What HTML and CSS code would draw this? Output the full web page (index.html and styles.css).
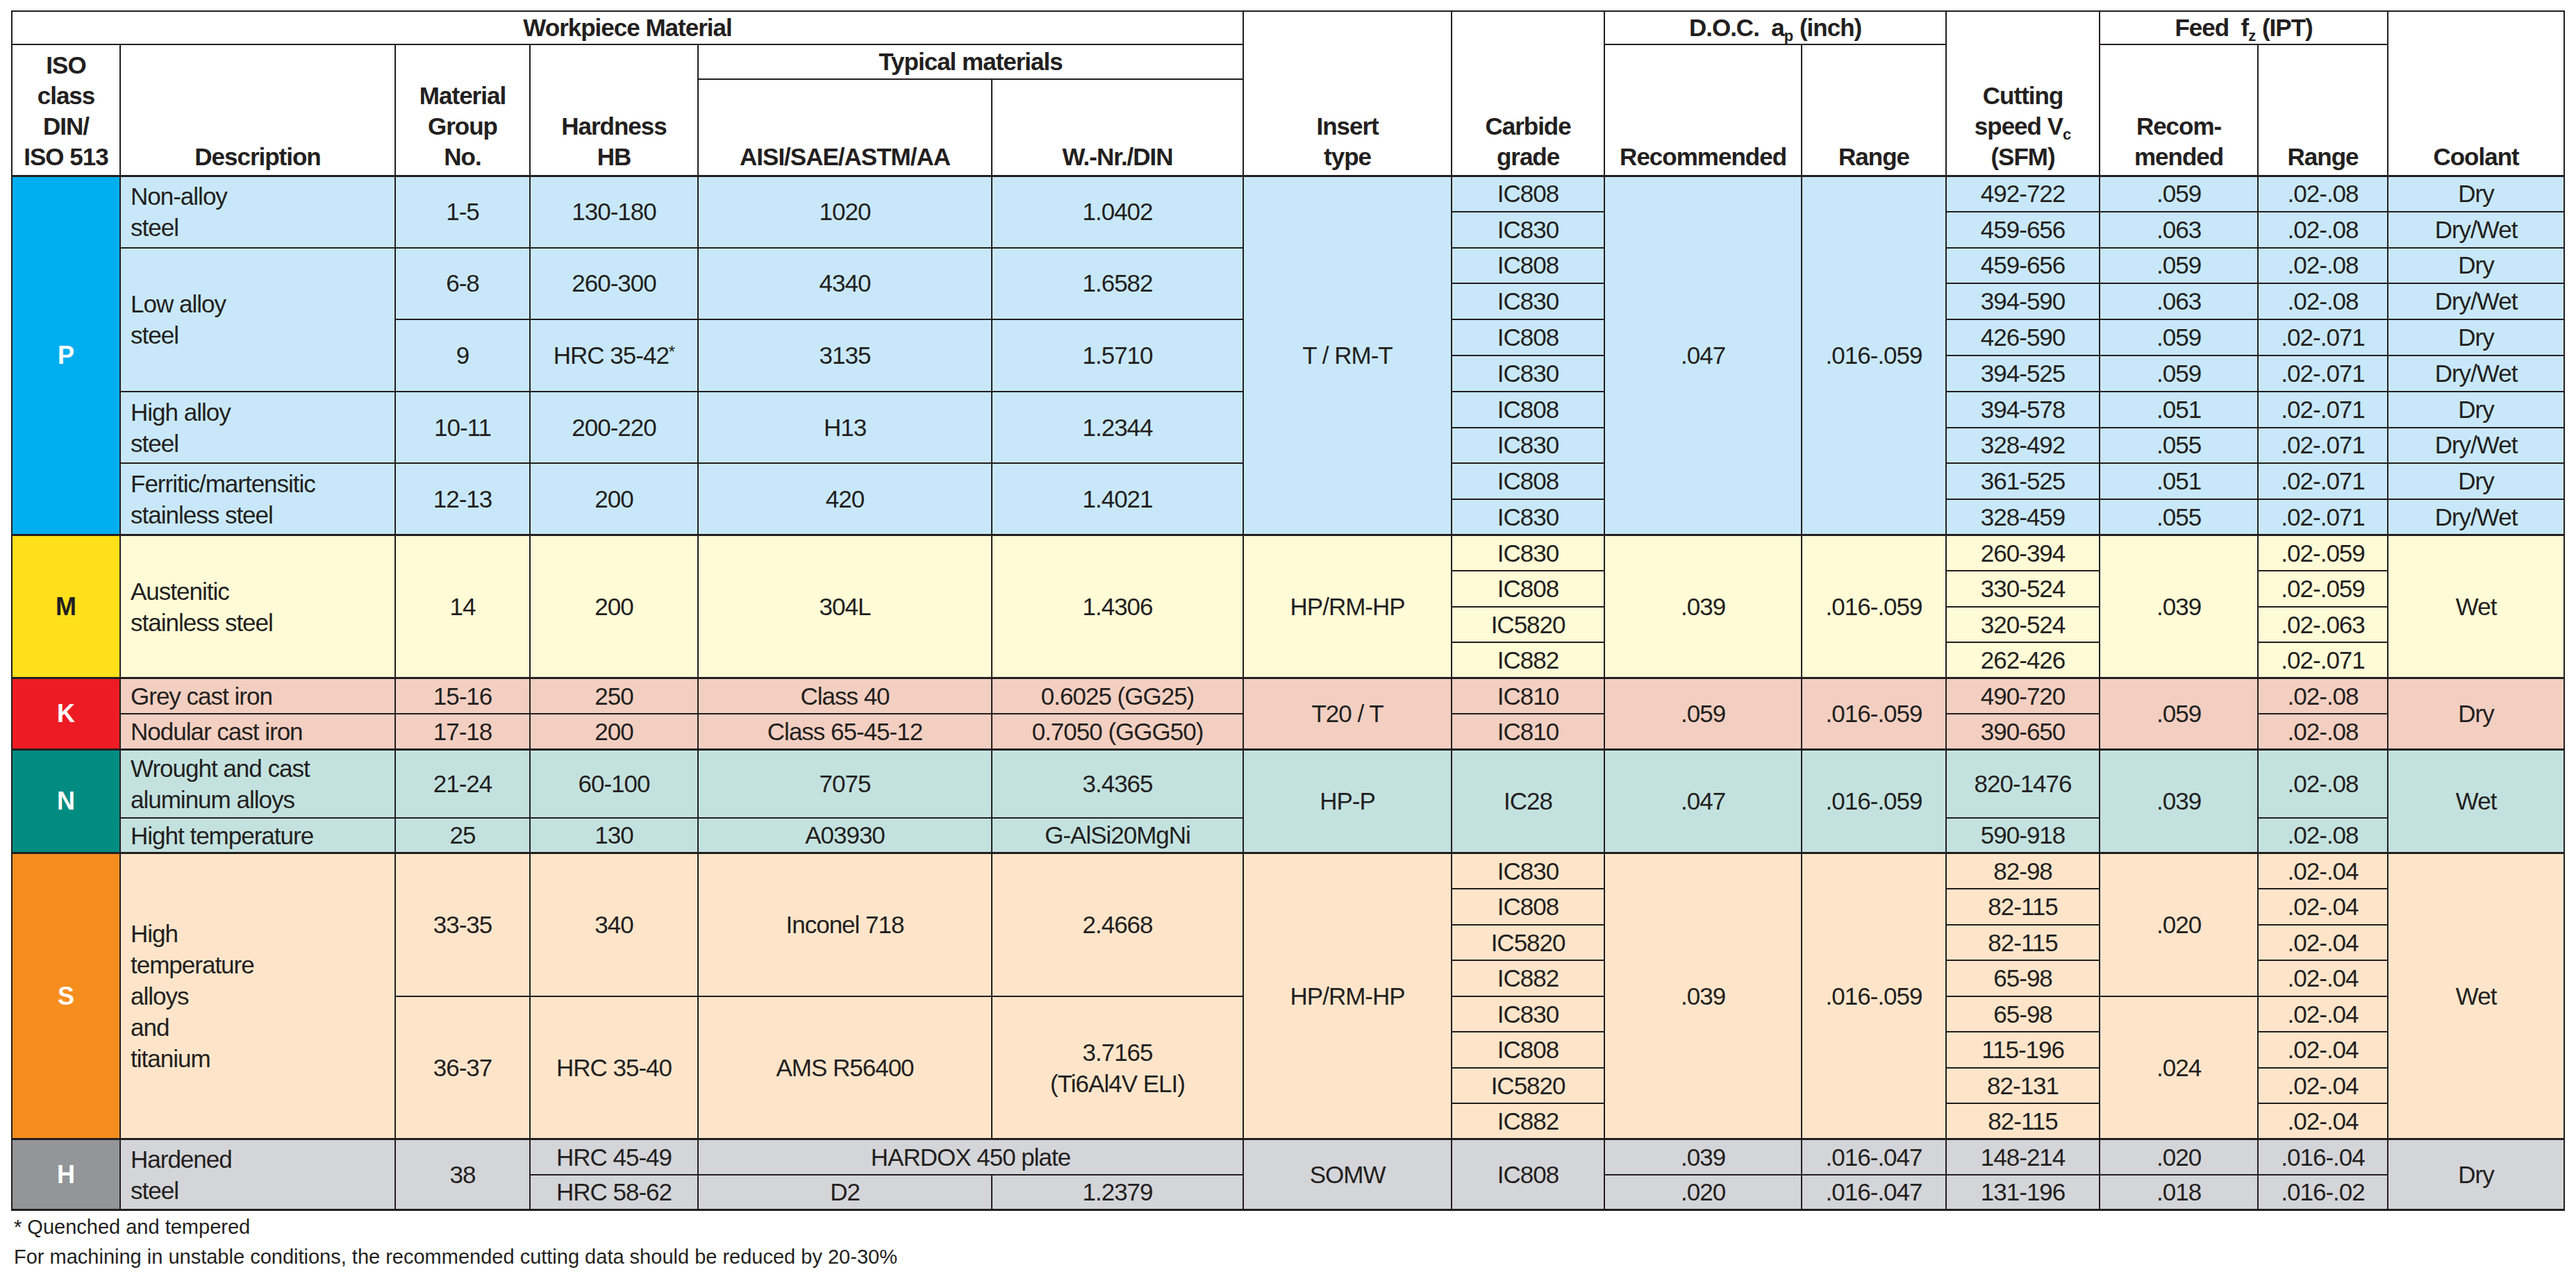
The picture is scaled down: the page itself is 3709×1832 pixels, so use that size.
FILE: index.html
```html
<!DOCTYPE html>
<html lang="en">
<head>
<meta charset="utf-8">
<title>Cutting data</title>
<link rel="stylesheet" href="styles.css">
</head>
<body>
<table class="grid">
<colgroup>
<col><col><col><col><col><col><col><col><col><col><col><col><col><col>
</colgroup>
<thead>
<tr class="h1">
<th colspan="6" class="mid">Workpiece Material</th>
<th rowspan="3">Insert<br>type</th>
<th rowspan="3">Carbide<br>grade</th>
<th colspan="2" class="mid">D.O.C.&nbsp; a<sub>p</sub> (inch)</th>
<th rowspan="3">Cutting<br>speed V<sub>c</sub><br>(SFM)</th>
<th colspan="2" class="mid">Feed&nbsp; f<sub>z</sub> (IPT)</th>
<th rowspan="3">Coolant</th>
</tr>
<tr class="h2">
<th rowspan="2">ISO<br>class<br>DIN/<br>ISO 513</th>
<th rowspan="2">Description</th>
<th rowspan="2">Material<br>Group<br>No.</th>
<th rowspan="2">Hardness<br>HB</th>
<th colspan="2" class="mid">Typical materials</th>
<th rowspan="2">Recommended</th>
<th rowspan="2">Range</th>
<th rowspan="2">Recom-<br>mended</th>
<th rowspan="2">Range</th>
</tr>
<tr class="h3">
<th>AISI/SAE/ASTM/AA</th>
<th>W.-Nr./DIN</th>
</tr>
</thead>

<tbody class="sec p">
<tr>
<td rowspan="10" class="iso">P</td>
<td rowspan="2" class="desc">Non-alloy<br>steel</td>
<td rowspan="2">1-5</td><td rowspan="2">130-180</td><td rowspan="2">1020</td><td rowspan="2">1.0402</td>
<td rowspan="10">T / RM-T</td>
<td>IC808</td>
<td rowspan="10">.047</td><td rowspan="10">.016-.059</td>
<td>492-722</td><td>.059</td><td>.02-.08</td><td>Dry</td>
</tr>
<tr><td>IC830</td><td>459-656</td><td>.063</td><td>.02-.08</td><td>Dry/Wet</td></tr>
<tr>
<td rowspan="4" class="desc">Low alloy<br>steel</td>
<td rowspan="2">6-8</td><td rowspan="2">260-300</td><td rowspan="2">4340</td><td rowspan="2">1.6582</td>
<td>IC808</td><td>459-656</td><td>.059</td><td>.02-.08</td><td>Dry</td>
</tr>
<tr><td>IC830</td><td>394-590</td><td>.063</td><td>.02-.08</td><td>Dry/Wet</td></tr>
<tr>
<td rowspan="2">9</td><td rowspan="2">HRC 35-42<span class="ast">*</span></td><td rowspan="2">3135</td><td rowspan="2">1.5710</td>
<td>IC808</td><td>426-590</td><td>.059</td><td>.02-.071</td><td>Dry</td>
</tr>
<tr><td>IC830</td><td>394-525</td><td>.059</td><td>.02-.071</td><td>Dry/Wet</td></tr>
<tr>
<td rowspan="2" class="desc">High alloy<br>steel</td>
<td rowspan="2">10-11</td><td rowspan="2">200-220</td><td rowspan="2">H13</td><td rowspan="2">1.2344</td>
<td>IC808</td><td>394-578</td><td>.051</td><td>.02-.071</td><td>Dry</td>
</tr>
<tr><td>IC830</td><td>328-492</td><td>.055</td><td>.02-.071</td><td>Dry/Wet</td></tr>
<tr>
<td rowspan="2" class="desc">Ferritic/martensitic<br>stainless steel</td>
<td rowspan="2">12-13</td><td rowspan="2">200</td><td rowspan="2">420</td><td rowspan="2">1.4021</td>
<td>IC808</td><td>361-525</td><td>.051</td><td>.02-.071</td><td>Dry</td>
</tr>
<tr><td>IC830</td><td>328-459</td><td>.055</td><td>.02-.071</td><td>Dry/Wet</td></tr>
</tbody>

<tbody class="sec m">
<tr>
<td rowspan="4" class="iso">M</td>
<td rowspan="4" class="desc">Austenitic<br>stainless steel</td>
<td rowspan="4">14</td><td rowspan="4">200</td><td rowspan="4">304L</td><td rowspan="4">1.4306</td>
<td rowspan="4">HP/RM-HP</td>
<td>IC830</td>
<td rowspan="4">.039</td><td rowspan="4">.016-.059</td>
<td>260-394</td>
<td rowspan="4">.039</td>
<td>.02-.059</td>
<td rowspan="4">Wet</td>
</tr>
<tr><td>IC808</td><td>330-524</td><td>.02-.059</td></tr>
<tr><td>IC5820</td><td>320-524</td><td>.02-.063</td></tr>
<tr><td>IC882</td><td>262-426</td><td>.02-.071</td></tr>
</tbody>

<tbody class="sec k">
<tr>
<td rowspan="2" class="iso">K</td>
<td class="desc">Grey cast iron</td>
<td>15-16</td><td>250</td><td>Class 40</td><td>0.6025 (GG25)</td>
<td rowspan="2">T20 / T</td>
<td>IC810</td>
<td rowspan="2">.059</td><td rowspan="2">.016-.059</td>
<td>490-720</td>
<td rowspan="2">.059</td>
<td>.02-.08</td>
<td rowspan="2">Dry</td>
</tr>
<tr>
<td class="desc">Nodular cast iron</td>
<td>17-18</td><td>200</td><td>Class 65-45-12</td><td>0.7050 (GGG50)</td>
<td>IC810</td><td>390-650</td><td>.02-.08</td>
</tr>
</tbody>

<tbody class="sec n">
<tr class="tall">
<td rowspan="2" class="iso">N</td>
<td class="desc">Wrought and cast<br>aluminum alloys</td>
<td>21-24</td><td>60-100</td><td>7075</td><td>3.4365</td>
<td rowspan="2">HP-P</td>
<td rowspan="2">IC28</td>
<td rowspan="2">.047</td><td rowspan="2">.016-.059</td>
<td>820-1476</td>
<td rowspan="2">.039</td>
<td>.02-.08</td>
<td rowspan="2">Wet</td>
</tr>
<tr>
<td class="desc">Hight temperature</td>
<td>25</td><td>130</td><td>A03930</td><td>G-AlSi20MgNi</td>
<td>590-918</td><td>.02-.08</td>
</tr>
</tbody>

<tbody class="sec s">
<tr>
<td rowspan="8" class="iso">S</td>
<td rowspan="8" class="desc">High<br>temperature<br>alloys<br>and<br>titanium</td>
<td rowspan="4">33-35</td><td rowspan="4">340</td><td rowspan="4">Inconel 718</td><td rowspan="4">2.4668</td>
<td rowspan="8">HP/RM-HP</td>
<td>IC830</td>
<td rowspan="8">.039</td><td rowspan="8">.016-.059</td>
<td>82-98</td>
<td rowspan="4">.020</td>
<td>.02-.04</td>
<td rowspan="8">Wet</td>
</tr>
<tr><td>IC808</td><td>82-115</td><td>.02-.04</td></tr>
<tr><td>IC5820</td><td>82-115</td><td>.02-.04</td></tr>
<tr><td>IC882</td><td>65-98</td><td>.02-.04</td></tr>
<tr>
<td rowspan="4">36-37</td><td rowspan="4">HRC 35-40</td><td rowspan="4">AMS R56400</td><td rowspan="4" class="two">3.7165<br>(Ti6Al4V ELI)</td>
<td>IC830</td><td>65-98</td>
<td rowspan="4">.024</td>
<td>.02-.04</td>
</tr>
<tr><td>IC808</td><td>115-196</td><td>.02-.04</td></tr>
<tr><td>IC5820</td><td>82-131</td><td>.02-.04</td></tr>
<tr><td>IC882</td><td>82-115</td><td>.02-.04</td></tr>
</tbody>

<tbody class="sec h">
<tr>
<td rowspan="2" class="iso">H</td>
<td rowspan="2" class="desc">Hardened<br>steel</td>
<td rowspan="2">38</td>
<td>HRC 45-49</td>
<td colspan="2">HARDOX 450 plate</td>
<td rowspan="2">SOMW</td>
<td rowspan="2">IC808</td>
<td>.039</td><td>.016-.047</td><td>148-214</td><td>.020</td><td>.016-.04</td>
<td rowspan="2">Dry</td>
</tr>
<tr>
<td>HRC 58-62</td><td>D2</td><td>1.2379</td>
<td>.020</td><td>.016-.047</td><td>131-196</td><td>.018</td><td>.016-.02</td>
</tr>
</tbody>
</table>

<div class="notes">
<p>* Quenched and tempered</p>
<p>For machining in unstable conditions, the recommended cutting data should be reduced by 20-30%</p>
</div>
</body>
</html>
```

FILE: styles.css
```css
html, body {
  margin: 0;
  background: #ffffff;
}

body {
  padding: 15px 0 0 16px;
  font-family: "Liberation Sans", Arial, Helvetica, sans-serif;
  color: #231f20;
}

.grid {
  border-collapse: collapse;
  table-layout: fixed;
  width: 3675px;
  font-size: 35px;
  letter-spacing: -1px;
}

.grid col:nth-child(1) { width: 156px; }
.grid col:nth-child(2) { width: 396px; }
.grid col:nth-child(3) { width: 194px; }
.grid col:nth-child(4) { width: 242px; }
.grid col:nth-child(5) { width: 423px; }
.grid col:nth-child(6) { width: 362px; }
.grid col:nth-child(7) { width: 300px; }
.grid col:nth-child(8) { width: 220px; }
.grid col:nth-child(9) { width: 284px; }
.grid col:nth-child(10) { width: 208px; }
.grid col:nth-child(11) { width: 221px; }
.grid col:nth-child(12) { width: 228px; }
.grid col:nth-child(13) { width: 187px; }
.grid col:nth-child(14) { width: 254px; }

.grid th,
.grid td {
  border: 2px solid #231f20;
  padding: 0 4px;
  text-align: center;
  white-space: nowrap;
}

.grid th {
  font-weight: bold;
  vertical-align: bottom;
  line-height: 44px;
  padding-bottom: 4px;
  background: #ffffff;
}

.grid th.mid {
  vertical-align: middle;
  padding-bottom: 0;
  line-height: 40px;
}

.grid sub {
  font-size: 22px;
  line-height: 0;
  vertical-align: -7px;
  letter-spacing: 0;
}

.h1 { height: 48px; }
.h2 { height: 50px; }
.h3 { height: 139px; }

.grid td {
  vertical-align: middle;
  line-height: 40px;
  font-weight: normal;
}

.grid td.desc {
  text-align: left;
  padding-left: 14px;
  line-height: 45px;
}

.grid td.two {
  line-height: 45px;
}

.grid td.iso {
  font-weight: bold;
  font-size: 36px;
  letter-spacing: 0;
  color: #ffffff;
}

.ast {
  font-size: 24px;
  vertical-align: 9px;
  line-height: 0;
}

.sec > tr:first-child > td {
  border-top-width: 3px;
}

.p td { background: #c8e8f9; }
.p td.iso { background: #00aeef; }
.p tr { height: 51.8px; }

.m td { background: #fffbd6; }
.m td.iso { background: #ffe01b; color: #231f20; }
.m tr { height: 51.5px; }

.k td { background: #f3cfc1; }
.k td.iso { background: #ed1c24; }
.k tr { height: 51.5px; }

.n td { background: #c3e2df; }
.n td.iso { background: #008c81; }
.n tr { height: 51px; }
.n tr.tall { height: 98px; }

.s td { background: #fee5ca; }
.s td.iso { background: #f68d1f; }
.s tr { height: 51.5px; }

.h td { background: #d4d5d9; }
.h td.iso { background: #939598; }
.h tr { height: 51px; }
.h tr:last-child td,
.h td[rowspan] {
  border-bottom-width: 3px;
}

.notes {
  margin: 2px 0 0 4px;
  font-size: 29px;
  line-height: 43px;
}

.notes p {
  margin: 0;
}
```
